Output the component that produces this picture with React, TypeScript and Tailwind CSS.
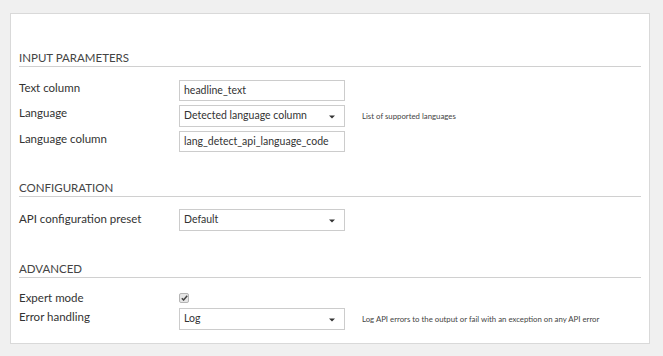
import React from "react";

const Caret = () => (
  <svg width="6" height="4" viewBox="0 0 6 4" className="absolute right-[9px] top-[9px]">
    <path d="M0 0.5 L6 0.5 L3 3.5 Z" fill="#333" />
  </svg>
);

const TextBox: React.FC<{ value: string }> = ({ value }) => (
  <div className="w-[166px] h-[21px] border border-[#cccccc] bg-white px-[4px] flex items-center text-[10.5px] text-[#333]">
    {value}
  </div>
);

const SelectBox: React.FC<{ value: string }> = ({ value }) => (
  <div className="relative w-[166px] h-[22px] border border-[#cccccc] bg-white px-[4px] flex items-center text-[10.5px] text-[#333]">
    {value}
    <Caret />
  </div>
);

const Row: React.FC<{
  label: string;
  help?: string;
  children: React.ReactNode;
  labelClass?: string;
}> = ({ label, help, children, labelClass = "" }) => (
  <div className="flex items-start">
    <div className={`w-[160px] shrink-0 text-[11.5px] leading-[16px] text-[#333] ${labelClass}`}>{label}</div>
    {children}
    {help && <div className="ml-[17px] mt-[6px] text-[7.8px] text-[#444] whitespace-nowrap">{help}</div>}
  </div>
);

const Header: React.FC<{ title: string; className?: string }> = ({ title, className = "" }) => (
  <div className={`h-[21px] pt-[5px] border-b border-[#d0d0d0] text-[11.5px] leading-[14px] text-[#444] ${className}`}>
    {title}
  </div>
);

export default function App() {
  return (
    <div className="w-[663px] h-[356px] bg-[#f0f0f0] pt-[13px] px-[10px] font-['Lato',sans-serif]">
      <div className="w-[640px] h-[331px] bg-white border border-[#d9d9d9] px-[8px] pt-[32px]">
        <Header title="INPUT PARAMETERS" />
        <div className="mt-[13px] flex flex-col gap-[4px]">
          <Row label="Text column">
            <TextBox value="headline_text" />
          </Row>
          <Row label="Language" help="List of supported languages">
            <SelectBox value="Detected language column" />
          </Row>
          <Row label="Language column">
            <TextBox value="lang_detect_api_language_code" />
          </Row>
        </div>

        <Header title="CONFIGURATION" className="mt-[24px]" />
        <div className="mt-[12px]">
          <Row label="API configuration preset" labelClass="mt-[2px]">
            <SelectBox value="Default" />
          </Row>
        </div>

        <Header title="ADVANCED" className="mt-[26px]" />
        <div className="mt-[12px] flex flex-col gap-[2px]">
          <Row label="Expert mode">
            <span className="mt-[3px] w-[10px] h-[10px] rounded-[2px] border border-[#b5b5b5] bg-[#e6e6e6] flex items-center justify-center">
              <svg width="7" height="6" viewBox="0 0 7 6">
                <path d="M0.8 3.2 L2.6 5 L6.2 0.8" stroke="#444" strokeWidth="1.5" fill="none" />
              </svg>
            </span>
          </Row>
          <Row label="Error handling" help="Log API errors to the output or fail with an exception on any API error" labelClass="mt-[1px]">
            <SelectBox value="Log" />
          </Row>
        </div>
      </div>
    </div>
  );
}
